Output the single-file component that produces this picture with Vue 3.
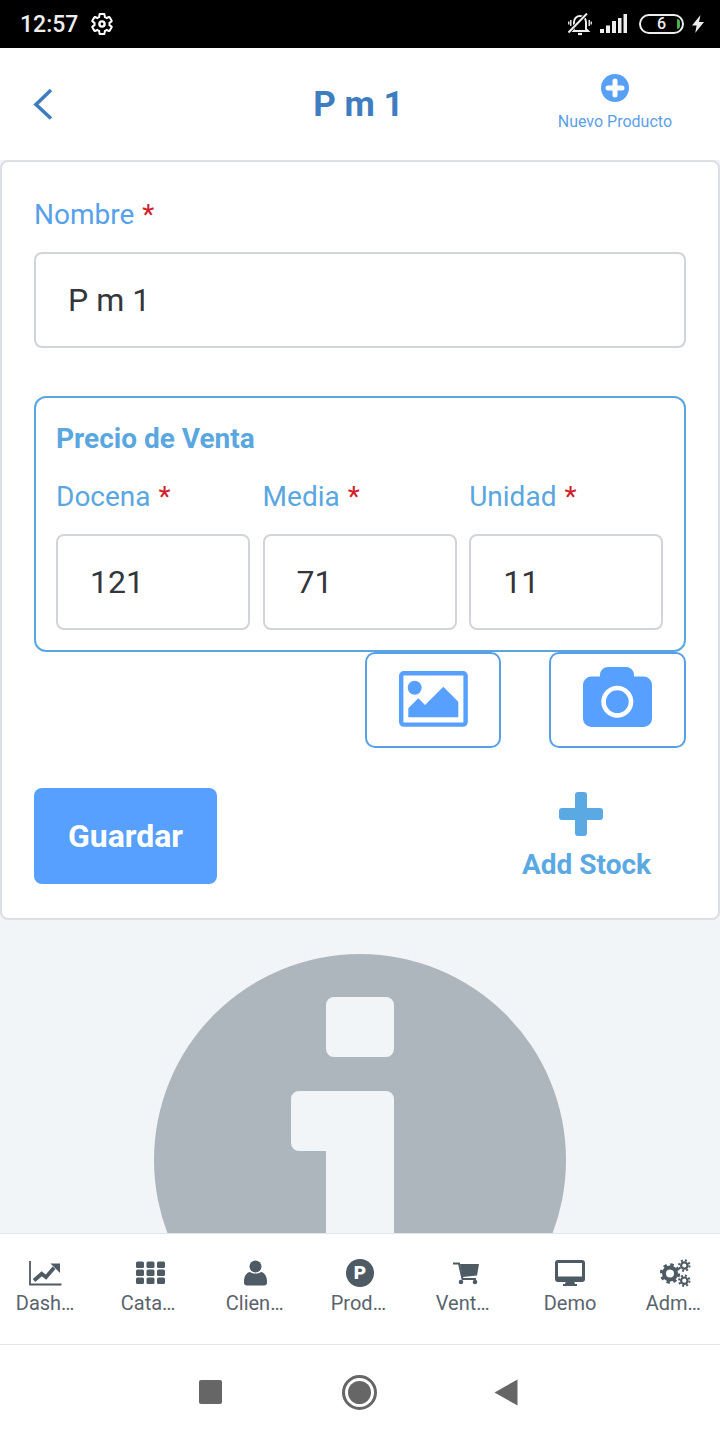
<template>
  <div class="screen">
    <div class="status-bar">
      <div class="status-left">
        <span class="clock">12:57</span>
        <svg class="status-gear" width="24" height="24" viewBox="0 0 24 24" fill="none" stroke="#fff" stroke-width="2">
          <path d="M19.43 12.98c.04-.32.07-.64.07-.98s-.03-.66-.07-.98l2.11-1.65c.19-.15.24-.42.12-.64l-2-3.46c-.12-.22-.39-.3-.61-.22l-2.49 1c-.52-.4-1.08-.73-1.69-.98l-.38-2.65C14.46 2.18 14.25 2 14 2h-4c-.25 0-.46.18-.49.42l-.38 2.65c-.61.25-1.17.59-1.69.98l-2.49-1c-.23-.09-.49 0-.61.22l-2 3.46c-.13.22-.07.49.12.64l2.11 1.65c-.04.32-.07.65-.07.98s.03.66.07.98l-2.11 1.65c-.19.15-.24.42-.12.64l2 3.46c.12.22.39.3.61.22l2.49-1c.52.4 1.08.73 1.69.98l.38 2.65c.03.24.24.42.49.42h4c.25 0 .46-.18.49-.42l.38-2.65c.61-.25 1.17-.59 1.69-.98l2.49 1c.23.09.49 0 .61-.22l2-3.46c.12-.22.07-.49-.12-.64l-2.11-1.65z"/>
          <circle cx="12" cy="12" r="2.6" stroke-width="2.4"/>
        </svg>
      </div>
      <div class="status-right">
        <svg width="24" height="23" viewBox="0 0 24 23" fill="none" stroke="#eee" stroke-width="2">
          <path d="M6 16V9a6 6 0 0 1 12 0v7l2 2H4z"/>
          <path d="M10 21h4" stroke-width="2.200"/>
          <path d="M2.800 7v6M.8 8.500v3M21.200 7v6M23.200 8.500v3" stroke-width="1.400"/>
          <path d="M.5 19.500L19 .5" stroke="#000" stroke-width="3.600"/>
          <path d="M.5 19.500L19 .5"/>
        </svg>
        <svg width="27" height="19" viewBox="0 0 27 19" fill="#eee">
          <rect x="0" y="15" width="4" height="4"/>
          <rect x="6" y="11.500" width="4" height="7.500"/>
          <rect x="12" y="7" width="4" height="12"/>
          <rect x="18" y="4" width="3.500" height="15"/>
          <rect x="23.500" y="0" width="3.500" height="19"/>
        </svg>
        <div class="battery">
          <span>6</span>
          <i class="battery-level"></i>
        </div>
        <svg width="12" height="18" viewBox="0 0 12 18" fill="#eee"><path d="M8.500 0L0 10.500h4.600L3.200 18 12 7H7z"/></svg>
      </div>
    </div>

    <header class="top-bar">
      <svg class="back" width="22" height="32" viewBox="0 0 22 32" fill="none" stroke="#3f7dc1" stroke-width="3.600">
        <path d="M19 2L4 16.500 19 30.500"/>
      </svg>
      <h1 class="title">P m 1</h1>
      <div class="new-product">
        <svg width="28" height="28" viewBox="0 0 28 28">
          <circle cx="14" cy="14" r="14" fill="#57a0f5"/>
          <path d="M14 7v14M7 14h14" stroke="#fff" stroke-width="5" stroke-linecap="round"/>
        </svg>
        <span>Nuevo Producto</span>
      </div>
    </header>

    <main class="content">
      <section class="card">
        <label class="field-label">Nombre <b>*</b></label>
        <div class="input">P m 1</div>

        <div class="price-box">
          <div class="price-title">Precio de Venta</div>
          <div class="price-grid">
            <div v-for="p in prices" :key="p.label" class="price-col">
              <label class="field-label price-label">{{ p.label }} <b>*</b></label>
              <div class="input">{{ p.value }}</div>
            </div>
          </div>
        </div>

        <div class="media-row">
          <button class="media-btn">
            <svg class="picture-icon" width="69" height="56" viewBox="0 0 69 56" fill="#57a0ff">
              <rect x="2.200" y="2.200" width="64.400" height="51.400" rx="2.500" fill="none" stroke="#57a0ff" stroke-width="4.400"/>
              <circle cx="15.700" cy="16.700" r="7"/>
              <path d="M9.300 37.300L19.300 27.300 26 34 44.300 15.700 59.300 30.700V46.300H9.300z"/>
            </svg>
          </button>
          <button class="media-btn">
            <svg class="camera-icon" width="69" height="60" viewBox="0 0 69 60">
              <path d="M17 9.500V8a8 8 0 0 1 8-8h18a8 8 0 0 1 8 8v1.500h9.500A8.500 8.500 0 0 1 69 18v33.500a8.500 8.500 0 0 1-8.500 8.500H8.500A8.500 8.500 0 0 1 0 51.500V18a8.500 8.500 0 0 1 8.500-8.500z" fill="#57a0ff"/>
              <circle cx="34.300" cy="34.700" r="13.700" fill="#57a0ff" stroke="#fff" stroke-width="4.600"/>
            </svg>
          </button>
        </div>

        <div class="action-row">
          <button class="save">Guardar</button>
          <div class="add-stock">
            <svg width="44" height="44" viewBox="0 0 44 44"><path d="M16 3a3 3 0 0 1 3-3h6a3 3 0 0 1 3 3v13h13a3 3 0 0 1 3 3v6a3 3 0 0 1-3 3H28v13a3 3 0 0 1-3 3h-6a3 3 0 0 1-3-3V28H3a3 3 0 0 1-3-3v-6a3 3 0 0 1 3-3h13z" fill="#5aa9e3"/></svg>
            <span>Add Stock</span>
          </div>
        </div>
      </section>

      <div class="placeholder">
        <svg width="412" height="412" viewBox="0 0 412 412">
          <path fill="#aeb6bd" fill-rule="evenodd" d="M206 0a206 206 0 1 0 0 412a206 206 0 1 0 0-412zM180 43h52a8 8 0 0 1 8 8v44a8 8 0 0 1-8 8h-52a8 8 0 0 1-8-8v-44a8 8 0 0 1 8-8zM145 137h87a8 8 0 0 1 8 8v155h26a8 8 0 0 1 8 8v32a8 8 0 0 1-8 8H146a8 8 0 0 1-8-8v-32a8 8 0 0 1 8-8h26V197h-27a8 8 0 0 1-8-8v-44a8 8 0 0 1 8-8z"/>
        </svg>
      </div>
    </main>

    <nav class="tab-bar">
      <div class="tab">
        <svg width="34" height="26" viewBox="0 0 34 26" fill="none" stroke="#4e5a64">
          <path d="M2 1v23.500H33.500" stroke-width="1.800"/>
          <path d="M6 20.500l7.700-6.700 4.300 3.400 8-9.400" stroke-width="3.800"/>
          <path d="M22.500 3.500H32V13z" fill="#4e5a64" stroke="none"/>
        </svg>
        <span>Dash…</span>
      </div>
      <div class="tab">
        <svg width="29" height="23" viewBox="0 0 29 23" fill="#4e5a64">
          <template v-for="y in [0, 8, 16]" :key="y">
            <rect v-for="x in [0, 10.500, 21]" :key="x" :x="x" :y="y" width="8" height="6.500" rx="1.500"/>
          </template>
        </svg>
        <span>Cata…</span>
      </div>
      <div class="tab">
        <svg width="23" height="25" viewBox="0 0 23 25" fill="#4e5a64">
          <circle cx="11.500" cy="6" r="6"/>
          <path d="M0 21c0-6 3-9 6-9.500 3 2 8 2 11 0 3 .5 6 3.500 6 9.500v1a3 3 0 0 1-3 3H3a3 3 0 0 1-3-3z"/>
        </svg>
        <span>Clien…</span>
      </div>
      <div class="tab">
        <div class="parking">P</div>
        <span>Prod…</span>
      </div>
      <div class="tab">
        <svg width="27" height="23" viewBox="0 0 27 23" fill="#4e5a64">
          <path d="M1 2h6l3.500 15.500H24" fill="none" stroke="#4e5a64" stroke-width="2"/>
          <path d="M8 2.500h19l-2 11.500-14.500 1.500z"/>
          <circle cx="9" cy="20.500" r="2.300"/>
          <circle cx="23" cy="20.500" r="2.300"/>
        </svg>
        <span>Vent…</span>
      </div>
      <div class="tab">
        <svg width="30" height="26" viewBox="0 0 30 26" fill="#4e5a64">
          <path fill-rule="evenodd" d="M3 0h24a3 3 0 0 1 3 3v16a3 3 0 0 1-3 3H3a3 3 0 0 1-3-3V3a3 3 0 0 1 3-3zM3 3v13.500h24V3z"/>
          <path d="M11 21h8l1 3h2v2H8v-2h2z"/>
        </svg>
        <span class="whole">Demo</span>
      </div>
      <div class="tab">
        <svg width="31" height="28" viewBox="0 0 31 28" fill="none" stroke="#4e5a64">
          <circle cx="10" cy="14.500" r="6" stroke-width="4"/>
          <circle cx="10" cy="14.500" r="8.700" stroke-width="3" stroke-dasharray="3.400 3.430"/>
          <circle cx="24.300" cy="6.500" r="3.200" stroke-width="2.200"/>
          <circle cx="24.300" cy="6.500" r="5.200" stroke-width="2" stroke-dasharray="2 2.080"/>
          <circle cx="24.300" cy="21.700" r="3.200" stroke-width="2.200"/>
          <circle cx="24.300" cy="21.700" r="5.200" stroke-width="2" stroke-dasharray="2 2.080"/>
        </svg>
        <span>Adm…</span>
      </div>
    </nav>

    <div class="nav-bar">
      <i class="nav-square"></i>
      <i class="nav-home"></i>
      <svg width="24" height="27" viewBox="0 0 24 27"><path d="M23.500 0.500V26.500L0.500 13.500z" fill="#666"/></svg>
    </div>
  </div>
</template>

<script setup>
const prices = [
  { label: 'Docena', value: '121' },
  { label: 'Media', value: '71' },
  { label: 'Unidad', value: '11' }
]
</script>

<style>
html, body { margin: 0; background: #fff; }
</style>

<style scoped>
.screen {
  width: 720px; height: 1440px;
  display: flex; flex-direction: column;
  overflow: hidden;
  font-family: Roboto, "Liberation Sans", sans-serif;
  background: #fff;
}

.status-bar {
  height: 48px; flex-shrink: 0;
  background: #000; color: #eee;
  display: flex; justify-content: space-between; align-items: center;
  padding: 0 16px 0 20px;
}
.status-left { display: flex; align-items: center; gap: 12px; }
.clock { font-size: 23px; font-weight: 500; }
.status-right { display: flex; align-items: center; }
.status-right svg:nth-child(1) { margin-right: 8px; }
.status-right svg:nth-child(2) { margin-right: 12px; margin-top: -1px; }
.battery {
  width: 45px; height: 20px; box-sizing: border-box;
  border: 2px solid #eee; border-radius: 10px;
  margin-right: 8px;
  position: relative;
  display: flex; align-items: center; justify-content: center;
  font-size: 16px; font-weight: 500; color: #eee; line-height: 1;
}
.battery-level {
  position: absolute; right: 2px; top: 3px;
  width: 3px; height: 10px;
  background: #4caf50; border-radius: 0 3px 3px 0;
}

.top-bar {
  height: 112px; flex-shrink: 0;
  display: flex; align-items: center; justify-content: space-between;
  padding: 0 34px 0 32px;
  box-sizing: border-box;
  position: relative;
}
.back { margin-top: -1px; }
.title {
  margin: 0;
  font-size: 35px; font-weight: 700;
  color: #3f7dc1;
  position: absolute; left: 0; right: 3px; text-align: center;
}
.new-product {
  display: flex; flex-direction: column; align-items: center; gap: 10px;
  color: #5c9fe8; font-size: 16px; margin-top: -3px; margin-right: 14px;
  line-height: 19px;
}

.content {
  flex: 1; min-height: 0;
  overflow: hidden;
  background: #f1f5f8;
  border-bottom: 1px solid #e3e7eb;
}
.card {
  height: 760px; box-sizing: border-box;
  background: #fff;
  border: 2px solid #dcdfe4; border-radius: 8px;
  padding: 34px 32px;
}
.field-label {
  display: block;
  font-size: 28px; line-height: 38px;
  color: #57a0ea;
  margin-bottom: 18px;
}
.field-label b { color: #d0202a; font-weight: 400; margin-left: 1px; }
.input {
  height: 96px; box-sizing: border-box;
  border: 2px solid #d1d5da; border-radius: 8px;
  padding: 0 32px;
  display: flex; align-items: center;
  font-size: 32px; color: #33363a;
}
.price-box {
  margin-top: 48px;
  height: 256px; box-sizing: border-box;
  border: 2px solid #5aa7df; border-radius: 12px;
  padding: 22px 20.500px 20px 20px;
}
.price-title {
  font-size: 28px; line-height: 38px; font-weight: 700;
  color: #5aa7df;
}
.price-grid {
  margin-top: 20px;
  display: grid; grid-template-columns: repeat(3, 1fr); gap: 12.300px;
}
.price-label { color: #5aa7df; }

.media-row {
  display: flex; justify-content: flex-end; gap: 48px;
}
.media-btn {
  width: 136px; height: 96px; box-sizing: border-box;
  background: #fff;
  border: 2px solid #57a0e8; border-radius: 10px;
  padding: 0;
  display: flex; align-items: center; justify-content: center;
}
.media-btn:last-child { width: 137px; }
.picture-icon { margin: -2px 0 0 1px; }
.camera-icon { margin-top: -6px; }
.action-row {
  margin-top: 40px;
  display: flex; justify-content: space-between;
}
.save {
  width: 183px; height: 96px;
  background: #57a0ff; color: #fff;
  border: none; border-radius: 8px;
  font-family: inherit; font-size: 32px; font-weight: 700;
}
.add-stock {
  width: 198px;
  display: flex; flex-direction: column; align-items: center;
  padding-top: 4px;
  color: #5aa9e3; font-size: 28px; font-weight: 700; line-height: 36px;
}
.add-stock svg { margin-right: 12px; }
.add-stock span { margin-top: 11px; margin-right: 1px; }

.placeholder {
  display: flex; justify-content: center;
  padding-top: 34px;
}

.tab-bar {
  flex-shrink: 0;
  display: flex; justify-content: center;
  border-bottom: 1px solid #e3e5e7;
  padding-top: 25px;
  height: 85px;
}
.tab {
  flex: 0 0 105px;
  display: flex; flex-direction: column; align-items: center;
  height: 60px;
}
.tab svg, .parking { height: 28px; flex-shrink: 0; }
.tab span {
  display: block; width: 58.500px;
  margin-top: 4px;
  font-size: 20px; line-height: 24px; color: #5a646d;
  white-space: nowrap;
}
.tab span.whole { text-align: center; }
.parking {
  width: 28px; border-radius: 50%;
  background: #4e5a64; color: #fff;
  font-size: 19px; font-weight: 900; line-height: 28px; text-align: center;
}

.nav-bar {
  height: 95px; flex-shrink: 0;
  display: flex; align-items: center;
  padding: 0 0 1px 199px;
  box-sizing: border-box;
}
.nav-square { width: 23px; height: 24px; background: #666; border-radius: 2px; }
.nav-home {
  width: 35px; height: 35px; box-sizing: border-box;
  margin: 0 117px 0 120px;
  border: 3px solid #666; border-radius: 50%;
  position: relative;
}
.nav-home::after {
  content: ''; position: absolute; inset: 3px;
  background: #666; border-radius: 50%;
}
</style>
